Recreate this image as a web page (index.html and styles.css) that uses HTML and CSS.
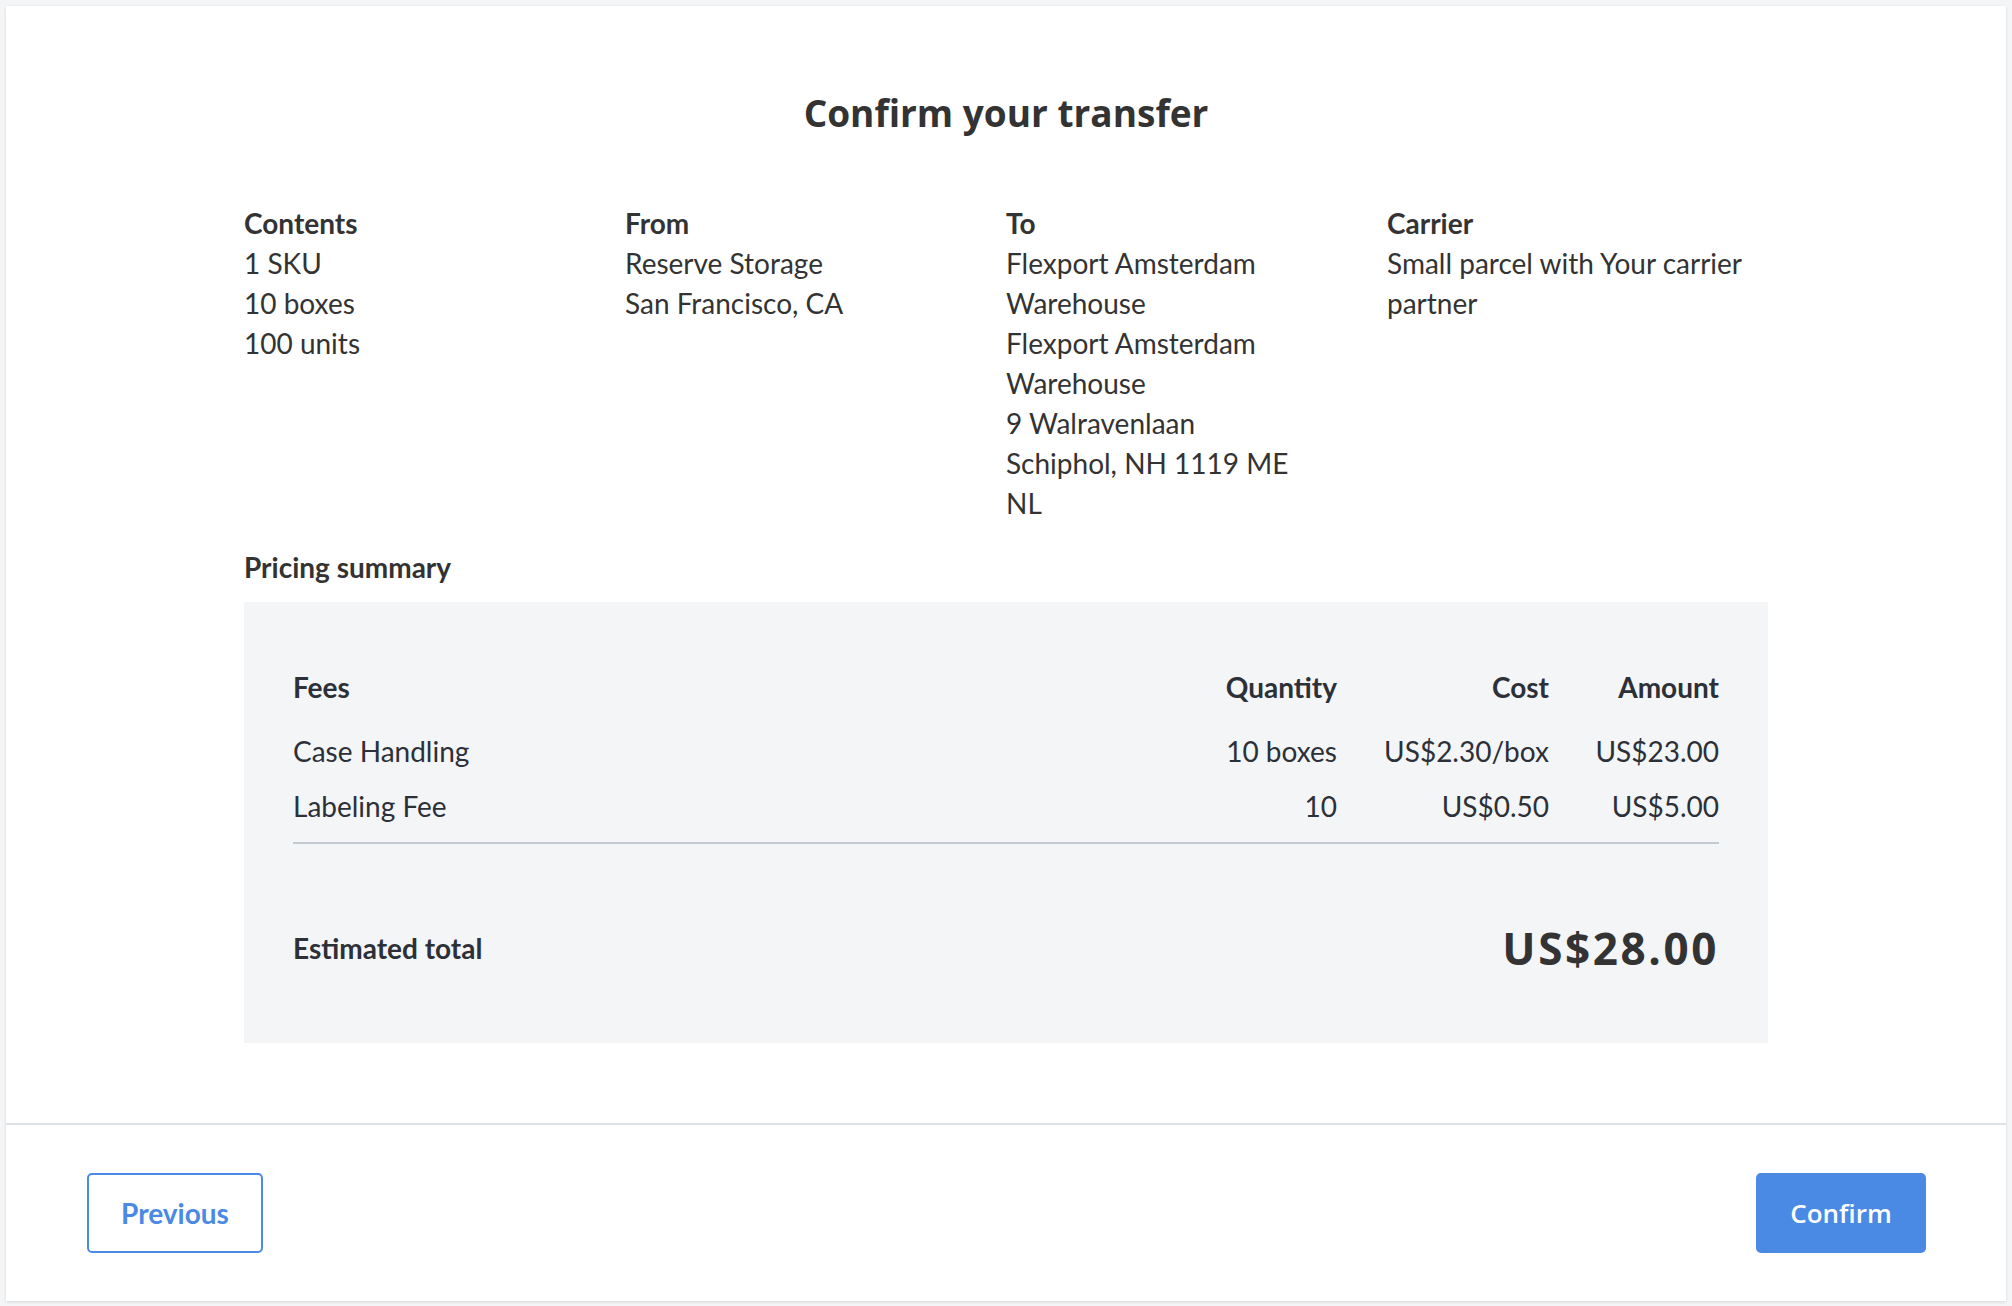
FILE: index.html
```html
<!DOCTYPE html>
<html lang="en">
<head>
<meta charset="UTF-8" />
<meta name="viewport" content="width=device-width, initial-scale=1" />
<title>Confirm your transfer</title>
<link rel="stylesheet" href="styles.css">
</head>
<body>

<div class="karta">
  <div class="obsah">
    <h1>Confirm your transfer</h1>

    <div class="detaily">
      <div class="sloupec">
        <h3>Contents</h3>
        <p>1 SKU</p>
        <p>10 boxes</p>
        <p>100 units</p>
      </div>
      <div class="sloupec">
        <h3>From</h3>
        <p>Reserve Storage</p>
        <p>San Francisco, CA</p>
      </div>
      <div class="sloupec">
        <h3>To</h3>
        <p>Flexport Amsterdam Warehouse</p>
        <p>Flexport Amsterdam Warehouse</p>
        <p>9 Walravenlaan</p>
        <p>Schiphol, NH 1119 ME</p>
        <p>NL</p>
      </div>
      <div class="sloupec">
        <h3>Carrier</h3>
        <p>Small parcel with Your carrier partner</p>
      </div>
    </div>

    <h3 class="nadpis-ceny">Pricing summary</h3>
    <div class="ceny">
      <div class="tabulka">
        <div class="radek hlavicka">
          <span>Fees</span>
          <span class="cislo">Quantity</span>
          <span class="cislo">Cost</span>
          <span class="cislo">Amount</span>
        </div>
        <div class="polozky">
          <div class="radek">
            <span>Case Handling</span>
            <span class="cislo">10 boxes</span>
            <span class="cislo">US$2.30/box</span>
            <span class="cislo">US$23.00</span>
          </div>
          <div class="radek druhy">
            <span>Labeling Fee</span>
            <span class="cislo">10</span>
            <span class="cislo">US$0.50</span>
            <span class="cislo">US$5.00</span>
          </div>
        </div>
      </div>
      <div class="celkem">
        <span class="celkem-popis">Estimated total</span>
        <span class="celkem-suma">US$28.00</span>
      </div>
    </div>
  </div>

  <div class="paticka">
    <button class="btn-zpet">Previous</button>
    <button class="btn-potvrdit">Confirm</button>
  </div>
</div>

</body>
</html>
```

FILE: styles.css
```css
body { margin: 0; padding: 6px; background: #f4f5f7; font-family: Lato, "Liberation Sans", sans-serif; color: #333; }
.karta {
  background: #fff;
  box-shadow: 0 1px 3px rgba(0,0,0,0.12);
}
.obsah {
  width: 1524px;
  margin: 0 auto;
  padding: 85px 0 80px 0;
}
h1 {
  margin: 0;
  text-align: center;
  font-family: "Open Sans", sans-serif;
  font-weight: 700;
  font-size: 37px;
  line-height: 44px;
  color: #333;
}
h3, p {
  margin: 0;
  font-size: 28px;
  line-height: 40px;
}
h3 { font-weight: 700; }
p { font-weight: 400; }
.detaily {
  display: grid;
  grid-template-columns: repeat(4, 1fr);
  margin-top: 68px;
}
.sloupec {
  padding-right: 14px;
}
.nadpis-ceny {
  margin-top: 24px;
}
.ceny {
  margin-top: 15px;
  background: #f4f5f7;
  padding: 65px 49px 68px 49px;
  color: #2c3038;
}
.radek {
  display: grid;
  grid-template-columns: 1fr 112px 166px 124px;
  column-gap: 46px;
  font-size: 28px;
  line-height: 40px;
  white-space: nowrap;
}
.hlavicka { font-weight: 700; }
.polozky {
  margin-top: 24px;
  padding-bottom: 16px;
  border-bottom: 2px solid #c4cad1;
}
.druhy { margin-top: 15px; }
.cislo { text-align: right; }
.celkem {
  display: flex;
  justify-content: space-between;
  align-items: center;
  margin-top: 77px;
}
.celkem-popis {
  font-size: 28px;
  font-weight: 700;
  line-height: 40px;
}
.celkem-suma {
  font-family: "Open Sans", sans-serif;
  font-weight: 700;
  font-size: 44px;
  line-height: 54px;
  letter-spacing: 2.6px;
  color: #333;
}
.paticka {
  display: flex;
  justify-content: space-between;
  border-top: 2px solid #dde2e7;
  padding: 48px 80px 48px 81px;
}
button {
  height: 80px;
  border-radius: 5px;
  cursor: pointer;
  font-size: 28px;
}
.btn-zpet {
  width: 176px;
  background: #fff;
  border: 2px solid #4a89e4;
  color: #4a89e4;
  font-family: Lato, sans-serif;
  font-weight: 700;
}
.btn-potvrdit {
  width: 170px;
  background: #4a89e4;
  border: none;
  color: #fff;
  font-family: "Open Sans", sans-serif;
  font-weight: 600;
  font-size: 26px;
}
```
